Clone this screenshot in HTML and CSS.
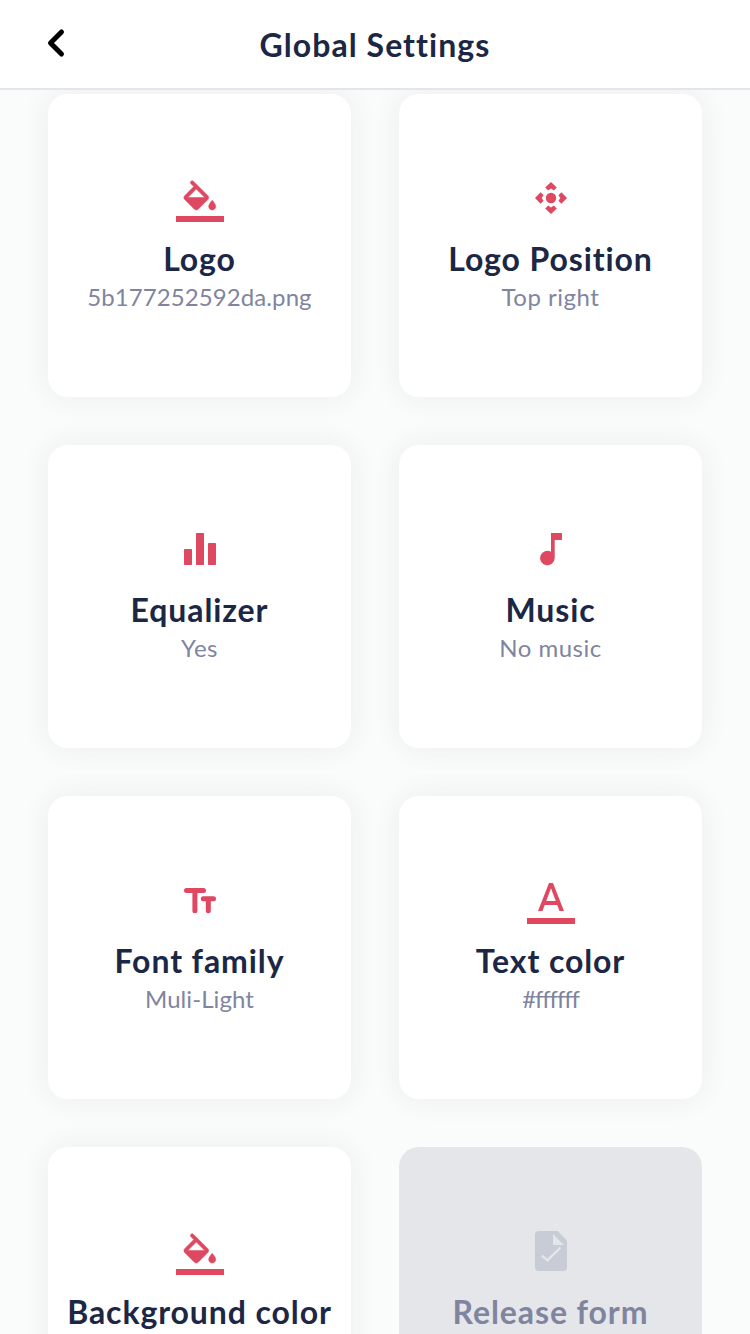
FILE: index.html
```html
<!DOCTYPE html>
<html lang="en">
<head>
  <meta charset="UTF-8" />
  <meta name="viewport" content="width=device-width, initial-scale=1.0"/>
  <title>Global Settings</title>
  <link rel="stylesheet" href="styles.css">
</head>
<body>

  <header class="header">
    <button class="back" aria-label="Back">
      <svg width="20" height="30" viewBox="0 0 20 30"><path d="M15.5 4L4.5 15l11 11"/></svg>
    </button>
    <h1>Global Settings</h1>
  </header>

  <main class="grid">
    <div class="card">
      <svg class="icon" viewBox="0 0 48 48">
        <path transform="translate(2.6 3.9) scale(1.77)" stroke="#de4860" stroke-width=".3" d="M16.56 8.94L8.32.7a1 1 0 0 0-1.41 1.41l1.68 1.68-5.15 5.15c-.59.59-.59 1.54 0 2.12l5.5 5.5c.29.29.68.44 1.06.44s.77-.15 1.06-.44l5.5-5.5c.59-.58.59-1.53 0-2.12zM5.21 10L10 5.21 14.79 10H5.21zM19 11.5s-2 2.17-2 3.5c0 1.1.9 2 2 2s2-.9 2-2c0-1.33-2-3.5-2-3.5z"/>
        <path d="M0 40h48v6H0z"/>
      </svg>
      <h2>Logo</h2>
      <p class="tight">5b177252592da.png</p>
    </div>

    <div class="card">
      <svg class="icon" viewBox="0 0 48 48">
        <circle cx="24" cy="22" r="5.2"/>
        <path d="M24 6l5.8 5.6-3 3-2.8-2-2.8 2-3-3z"/>
        <path d="M24 38l5.8-5.6-3-3-2.8 2-2.8-2-3 3z"/>
        <path d="M8 22l5.6-5.8 3 3-2 2.8 2 2.8-3 3z"/>
        <path d="M40 22l-5.6-5.8-3 3 2 2.8-2 2.8 3 3z"/>
      </svg>
      <h2>Logo Position</h2>
      <p>Top right</p>
    </div>

    <div class="card">
      <svg class="icon" viewBox="0 0 48 48">
        <rect x="8" y="22" width="8" height="16" rx=".8"/>
        <rect x="20" y="6" width="8" height="32" rx=".8"/>
        <rect x="32" y="16" width="8" height="22" rx=".8"/>
      </svg>
      <h2>Equalizer</h2>
      <p>Yes</p>
    </div>

    <div class="card">
      <svg class="icon" viewBox="0 0 48 48">
        <path d="M24 6h10.2a.8.8 0 0 1 .8.8v5.4a.8.8 0 0 1-.8.8h-6.5v18a7.3 7.3 0 1 1-3.7-6.3z"/>
      </svg>
      <h2>Music</h2>
      <p>No music</p>
    </div>

    <div class="card">
      <svg class="icon" viewBox="0 0 48 48">
        <rect x="8" y="10" width="22" height="5" rx="2.5"/>
        <rect x="16.4" y="11" width="5" height="24.3" rx="2.5"/>
        <rect x="24.8" y="18.3" width="15.2" height="5" rx="2.5"/>
        <rect x="29.8" y="19" width="5" height="16.3" rx="2.5"/>
      </svg>
      <h2>Font family</h2>
      <p class="tight">Muli-Light</p>
    </div>

    <div class="card">
      <svg class="icon" viewBox="0 0 48 48">
        <path transform="translate(0 -1) scale(2)" d="M11 3L5.5 17h2.25l1.12-3h6.25l1.12 3h2.25L13 3h-2zm-1.38 9L12 5.67 14.38 12H9.62z"/>
        <path d="M0 40h48v6H0z"/>
      </svg>
      <h2>Text color</h2>
      <p class="hex">#ffffff</p>
    </div>

    <div class="card">
      <svg class="icon" viewBox="0 0 48 48">
        <path transform="translate(2.6 3.9) scale(1.77)" stroke="#de4860" stroke-width=".3" d="M16.56 8.94L8.32.7a1 1 0 0 0-1.41 1.41l1.68 1.68-5.15 5.15c-.59.59-.59 1.54 0 2.12l5.5 5.5c.29.29.68.44 1.06.44s.77-.15 1.06-.44l5.5-5.5c.59-.58.59-1.53 0-2.12zM5.21 10L10 5.21 14.79 10H5.21zM19 11.5s-2 2.17-2 3.5c0 1.1.9 2 2 2s2-.9 2-2c0-1.33-2-3.5-2-3.5z"/>
        <path d="M0 40h48v6H0z"/>
      </svg>
      <h2>Background color</h2>
    </div>

    <div class="card disabled">
      <svg class="icon" viewBox="0 0 48 48">
        <path d="M12 2h18.7L40 11.7V38a4 4 0 0 1-4 4H12a4 4 0 0 1-4-4V6a4 4 0 0 1 4-4zM26 5v11h11z" fill-rule="evenodd"/>
        <path class="check" d="M15 26.6l5.4 4.7L33.5 18.5"/>
      </svg>
      <h2>Release form</h2>
    </div>
  </main>

</body>
</html>
```
FILE: styles.css
```css
* {
  box-sizing: border-box;
  font-family: Lato, 'Open Sans', sans-serif;
}
body {
  margin: 0;
  height: 100vh;
  overflow: hidden;
  background: #fafcfb;
  color: #1c2745;
}
.header {
  display: grid;
  grid-template-columns: 80px 1fr 80px;
  align-items: center;
  height: 90px;
  background: #fff;
  border-bottom: 2px solid #e4e4ea;
}
.back {
  height: 30px;
  margin: 0 0 2px 46px;
  padding: 0;
  width: 20px;
  background: none;
  border: none;
}
.back svg {
  display: block;
  fill: none;
  stroke: #000;
  stroke-width: 5;
  stroke-linecap: round;
  stroke-linejoin: round;
}
h1, h2 {
  margin: 0;
  font-size: 32px;
  font-weight: 700;
  line-height: 38px;
  letter-spacing: 0.9px;
  text-align: center;
  white-space: nowrap;
}
h1 {
  padding-top: 1px;
  letter-spacing: 1.05px;
}
.grid {
  display: grid;
  grid-template-columns: 303px 303px;
  grid-auto-rows: 303px;
  gap: 48px;
  height: 1244px;
  padding: 4px 48px 0;
  overflow: hidden;
}
.card {
  display: flex;
  flex-direction: column;
  align-items: center;
  padding-top: 82px;
  background: #fff;
  border-radius: 20px;
  box-shadow: 0 0 30px rgba(30,40,50,0.07);
}
.icon {
  width: 48px;
  height: 48px;
  margin-bottom: 16px;
  fill: #de4860;
}
.card p {
  margin: 5px 0 0;
  font-size: 24px;
  line-height: 28px;
  letter-spacing: 0.5px;
  color: #7f859f;
}
.card .tight {
  letter-spacing: 0.08px;
}
.card .hex {
  letter-spacing: -1.1px;
}
.disabled {
  background: #e4e6ea;
  color: #7f859f;
  box-shadow: none;
}
.disabled .icon {
  fill: #c7ccd6;
}
.disabled .check {
  fill: none;
  stroke: #e4e6ea;
  stroke-width: 2.4;
}
```
